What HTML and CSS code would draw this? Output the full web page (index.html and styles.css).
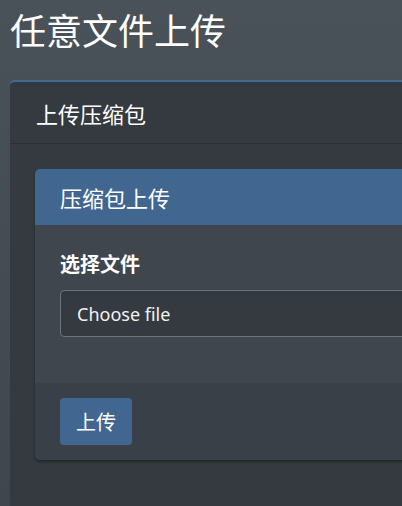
FILE: index.html
```html
<!DOCTYPE html>
<html lang="zh">
<head>
<meta charset="utf-8">
<title>任意文件上传</title>
<link rel="stylesheet" href="styles.css">
</head>
<body>
<div class="page">
  <h1 class="title">任意文件上传</h1>
  <div class="card outer">
    <div class="card-header outer-header">上传压缩包</div>
    <div class="outer-body">
      <div class="card inner">
        <div class="inner-header">压缩包上传</div>
        <div class="inner-body">
          <label class="label">选择文件</label>
          <div class="file-input">Choose file</div>
        </div>
        <div class="inner-footer">
          <button class="btn">上传</button>
        </div>
      </div>
    </div>
  </div>
</div>
</body>
</html>
```
FILE: styles.css
```css
html, body {
  margin: 0;
  padding: 0;
  height: 100%;
  overflow: hidden;
}
body {
  background: linear-gradient(180deg, #4a5259 0%, #454c54 50%, #3f464d 100%);
  font-family: "Noto Sans CJK SC", "Noto Sans", sans-serif;
  color: #ffffff;
}
.page {
  width: 560px;
  padding: 4px 0 0 10px;
}
.title {
  margin: 0 0 26px 0;
  font-size: 36px;
  font-weight: 400;
  line-height: 50px;
}
.outer {
  background: #343a40;
  border-top: 2px solid #436a95;
  border-radius: 5px;
  height: 430px;
}
.outer-header {
  height: 61px;
  padding: 0 26px;
  display: flex;
  align-items: center;
  font-size: 22px;
  border-bottom: 1px solid #2b3035;
}
.outer-body {
  padding: 25px;
}
.inner {
  border-radius: 5px;
  overflow: hidden;
  box-shadow: 0 2px 3px rgba(0, 0, 0, 0.35);
}
.inner-header {
  background: #416690;
  height: 56px;
  padding: 0 25px;
  display: flex;
  align-items: center;
  font-size: 22px;
}
.inner-body {
  background: #3f464d;
  padding: 25px 25px 46px;
}
.label {
  display: block;
  font-size: 20px;
  font-weight: 700;
  line-height: 28px;
  margin-bottom: 12px;
}
.file-input {
  height: 45px;
  border: 1px solid #6c757d;
  border-radius: 4px;
  background: #343a40;
  padding: 0 16px;
  display: flex;
  align-items: center;
  font-family: "Noto Sans", sans-serif;
  font-size: 18px;
  color: #f2f2f2;
}
.inner-footer {
  background: #3a4047;
  padding: 15px 25px;
}
.btn {
  background: #416690;
  color: #ffffff;
  border: none;
  border-radius: 4px;
  height: 47px;
  width: 72px;
  font-family: "Noto Sans CJK SC", sans-serif;
  font-size: 20px;
  padding: 0;
}
```
